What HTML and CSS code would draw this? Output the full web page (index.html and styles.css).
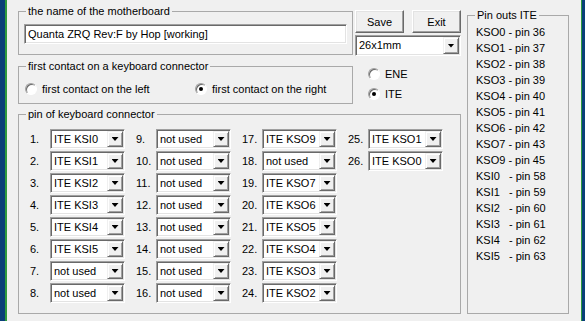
FILE: index.html
```html
<!DOCTYPE html>
<html lang="en">
<head>
    <meta charset="utf-8">
    <title>Keyboard connector</title>
    <link rel="stylesheet" href="styles.css">
</head>
<body>
    <div class="desk desk-left"></div>

    <div class="window">
        <div class="main">
            <div class="row-top">
                <fieldset class="box box-name">
                    <legend>the name of the motherboard</legend>
                    <div class="edit">Quanta ZRQ Rev:F by Hop [working]</div>
                </fieldset>
                <div class="actions">
                    <button class="btn">Save</button>
                    <button class="btn">Exit</button>
                    <div class="combo combo-wide"><span class="value">26x1mm</span><span class="arrow"><i></i></span></div>
                </div>
            </div>

            <div class="row-mid">
                <fieldset class="box box-contact">
                    <legend>first contact on a keyboard connector</legend>
                    <label class="opt opt-left"><span class="radio"></span>first contact on the left</label>
                    <label class="opt"><span class="radio on"></span>first contact on the right</label>
                </fieldset>
                <div class="chips">
                    <label class="opt"><span class="radio"></span>ENE</label>
                    <label class="opt"><span class="radio on"></span>ITE</label>
                </div>
            </div>

            <fieldset class="box box-pins">
                <legend>pin of keyboard connector</legend>
                <div class="pins">
                    <div class="pin"><span class="num">1.</span><div class="combo"><span class="value">ITE KSI0</span><span class="arrow"><i></i></span></div></div>
                    <div class="pin"><span class="num">2.</span><div class="combo"><span class="value">ITE KSI1</span><span class="arrow"><i></i></span></div></div>
                    <div class="pin"><span class="num">3.</span><div class="combo"><span class="value">ITE KSI2</span><span class="arrow"><i></i></span></div></div>
                    <div class="pin"><span class="num">4.</span><div class="combo"><span class="value">ITE KSI3</span><span class="arrow"><i></i></span></div></div>
                    <div class="pin"><span class="num">5.</span><div class="combo"><span class="value">ITE KSI4</span><span class="arrow"><i></i></span></div></div>
                    <div class="pin"><span class="num">6.</span><div class="combo"><span class="value">ITE KSI5</span><span class="arrow"><i></i></span></div></div>
                    <div class="pin"><span class="num">7.</span><div class="combo"><span class="value">not used</span><span class="arrow"><i></i></span></div></div>
                    <div class="pin"><span class="num">8.</span><div class="combo"><span class="value">not used</span><span class="arrow"><i></i></span></div></div>

                    <div class="pin"><span class="num">9.</span><div class="combo"><span class="value">not used</span><span class="arrow"><i></i></span></div></div>
                    <div class="pin"><span class="num">10.</span><div class="combo"><span class="value">not used</span><span class="arrow"><i></i></span></div></div>
                    <div class="pin"><span class="num">11.</span><div class="combo"><span class="value">not used</span><span class="arrow"><i></i></span></div></div>
                    <div class="pin"><span class="num">12.</span><div class="combo"><span class="value">not used</span><span class="arrow"><i></i></span></div></div>
                    <div class="pin"><span class="num">13.</span><div class="combo"><span class="value">not used</span><span class="arrow"><i></i></span></div></div>
                    <div class="pin"><span class="num">14.</span><div class="combo"><span class="value">not used</span><span class="arrow"><i></i></span></div></div>
                    <div class="pin"><span class="num">15.</span><div class="combo"><span class="value">not used</span><span class="arrow"><i></i></span></div></div>
                    <div class="pin"><span class="num">16.</span><div class="combo"><span class="value">not used</span><span class="arrow"><i></i></span></div></div>

                    <div class="pin"><span class="num">17.</span><div class="combo"><span class="value">ITE KSO9</span><span class="arrow"><i></i></span></div></div>
                    <div class="pin"><span class="num">18.</span><div class="combo"><span class="value">not used</span><span class="arrow"><i></i></span></div></div>
                    <div class="pin"><span class="num">19.</span><div class="combo"><span class="value">ITE KSO7</span><span class="arrow"><i></i></span></div></div>
                    <div class="pin"><span class="num">20.</span><div class="combo"><span class="value">ITE KSO6</span><span class="arrow"><i></i></span></div></div>
                    <div class="pin"><span class="num">21.</span><div class="combo"><span class="value">ITE KSO5</span><span class="arrow"><i></i></span></div></div>
                    <div class="pin"><span class="num">22.</span><div class="combo"><span class="value">ITE KSO4</span><span class="arrow"><i></i></span></div></div>
                    <div class="pin"><span class="num">23.</span><div class="combo"><span class="value">ITE KSO3</span><span class="arrow"><i></i></span></div></div>
                    <div class="pin"><span class="num">24.</span><div class="combo"><span class="value">ITE KSO2</span><span class="arrow"><i></i></span></div></div>

                    <div class="pin"><span class="num">25.</span><div class="combo"><span class="value">ITE KSO1</span><span class="arrow"><i></i></span></div></div>
                    <div class="pin"><span class="num">26.</span><div class="combo"><span class="value">ITE KSO0</span><span class="arrow"><i></i></span></div></div>
                </div>
            </fieldset>
        </div>

        <fieldset class="box box-pinouts">
            <legend>Pin outs ITE</legend>
            <ul class="pinlist">
                <li>KSO0 - pin 36</li>
                <li>KSO1 - pin 37</li>
                <li>KSO2 - pin 38</li>
                <li>KSO3 - pin 39</li>
                <li>KSO4 - pin 40</li>
                <li>KSO5 - pin 41</li>
                <li>KSO6 - pin 42</li>
                <li>KSO7 - pin 43</li>
                <li>KSO9 - pin 45</li>
                <li>KSI0   - pin 58</li>
                <li>KSI1   - pin 59</li>
                <li>KSI2   - pin 60</li>
                <li>KSI3   - pin 61</li>
                <li>KSI4   - pin 62</li>
                <li>KSI5   - pin 63</li>
            </ul>
        </fieldset>
    </div>

    <div class="desk desk-right"></div>
</body>
</html>
```

FILE: styles.css
```css
* {
    box-sizing: border-box;
}

body {
    margin: 0;
    height: 321px;
    display: flex;
    background: #f0f0f0;
    font-family: "Liberation Sans", Arial, sans-serif;
    font-size: 11px;
    color: #000;
    overflow: hidden;
}

/* desktop showing at the edges */
.desk {
    background: #0a3f78;
}

.desk-left {
    width: 7px;
    border-right: 2px solid #2f9a3e;
}

.desk-right {
    width: 4px;
    border-left: 1px solid #2f9a3e;
}

.window {
    flex: 1;
    display: flex;
    align-items: flex-start;
    padding-left: 11px;
}

.main {
    width: 443px;
    display: flex;
    flex-direction: column;
}

/* group boxes */
.box {
    margin: 0;
    min-width: 0;
    border: 1px solid #a9a9a9;
    padding: 0;
}

.box legend {
    margin-left: 7px;
    padding: 0 2px;
    line-height: 13px;
}

.row-top {
    display: flex;
    align-items: flex-start;
}

.box-name {
    width: 335px;
    margin-top: 5px;
    padding: 6px 5px 10px 0;
}

.edit {
    height: 20px;
    margin-left: 5px;
    background: #fff;
    border: 1px solid;
    border-color: #a0a0a0 #fff #fff #a0a0a0;
    box-shadow: inset 1px 1px 0 #696969, inset -1px -1px 0 #e3e3e3;
    padding: 0 3px;
    line-height: 18px;
    white-space: nowrap;
}

.actions {
    width: 106px;
    margin: 10px 0 0 2px;
    display: flex;
    flex-wrap: wrap;
    gap: 2px 8px;
}

.btn {
    width: 49px;
    height: 23px;
    margin: 0;
    padding: 0;
    background: #f0f0f0;
    border: 1px solid;
    border-color: #fff #696969 #696969 #fff;
    box-shadow: inset -1px -1px 0 #a0a0a0, inset 1px 1px 0 #e3e3e3;
    font-family: inherit;
    font-size: 11px;
    color: #000;
}

/* drop-down lists */
.combo {
    display: flex;
    width: 75px;
    height: 20px;
    padding: 1px;
    background: #fff;
    border: 1px solid;
    border-color: #a0a0a0 #fff #fff #a0a0a0;
    box-shadow: inset 1px 1px 0 #696969, inset -1px -1px 0 #e3e3e3;
}

.combo-wide {
    width: 106px;
    height: 21px;
}

.value {
    flex: 1;
    padding-left: 2px;
    line-height: 16px;
    white-space: nowrap;
    overflow: hidden;
}

.arrow {
    width: 16px;
    display: flex;
    align-items: center;
    justify-content: center;
    background: #f0f0f0;
    border: 1px solid;
    border-color: #f0f0f0 #696969 #696969 #f0f0f0;
    box-shadow: inset 1px 1px 0 #fff, inset -1px -1px 0 #a0a0a0;
}

.arrow i {
    width: 7px;
    height: 4px;
    background: #000;
    clip-path: polygon(0 0, 100% 0, 50% 100%);
}

/* radio buttons */
.opt {
    display: flex;
    align-items: center;
    gap: 5px;
    white-space: nowrap;
}

.radio {
    width: 12px;
    height: 12px;
    border-radius: 50%;
    background: #fff;
    border: 1px solid;
    border-color: #a0a0a0 #fff #fff #a0a0a0;
    box-shadow: inset 1px 1px 0 #696969;
    display: flex;
    align-items: center;
    justify-content: center;
}

.radio.on::after {
    content: "";
    width: 4px;
    height: 4px;
    border-radius: 50%;
    background: #000;
}

.row-mid {
    display: flex;
    align-items: flex-start;
    margin-top: 4px;
}

.box-contact {
    width: 335px;
    height: 44px;
    padding: 2px 6px 0 0;
    display: flex;
    align-items: center;
}

.opt-left {
    width: 170px;
    margin-left: 6px;
}

.chips {
    margin: 8px 0 0 15px;
    display: flex;
    flex-direction: column;
    gap: 8px;
}

/* pins */
.box-pins {
    width: 443px;
    height: 206px;
    margin-top: 4px;
    padding: 8px 0 0 0;
}

.pins {
    margin-left: 11px;
    display: grid;
    grid-template-columns: repeat(4, 95px);
    grid-template-rows: repeat(8, 20px);
    grid-auto-flow: column;
    column-gap: 11px;
    row-gap: 2px;
}

.pin {
    display: flex;
    align-items: center;
}

.num {
    width: 20px;
}

/* pin outs list */
.box-pinouts {
    width: 102px;
    height: 305px;
    margin: 9px 0 0 6px;
    padding: 2px 0 0 0;
}

.pinlist {
    list-style: none;
    margin: 0 0 0 8px;
    padding: 0;
}

.pinlist li {
    line-height: 16px;
    white-space: pre;
}
```
